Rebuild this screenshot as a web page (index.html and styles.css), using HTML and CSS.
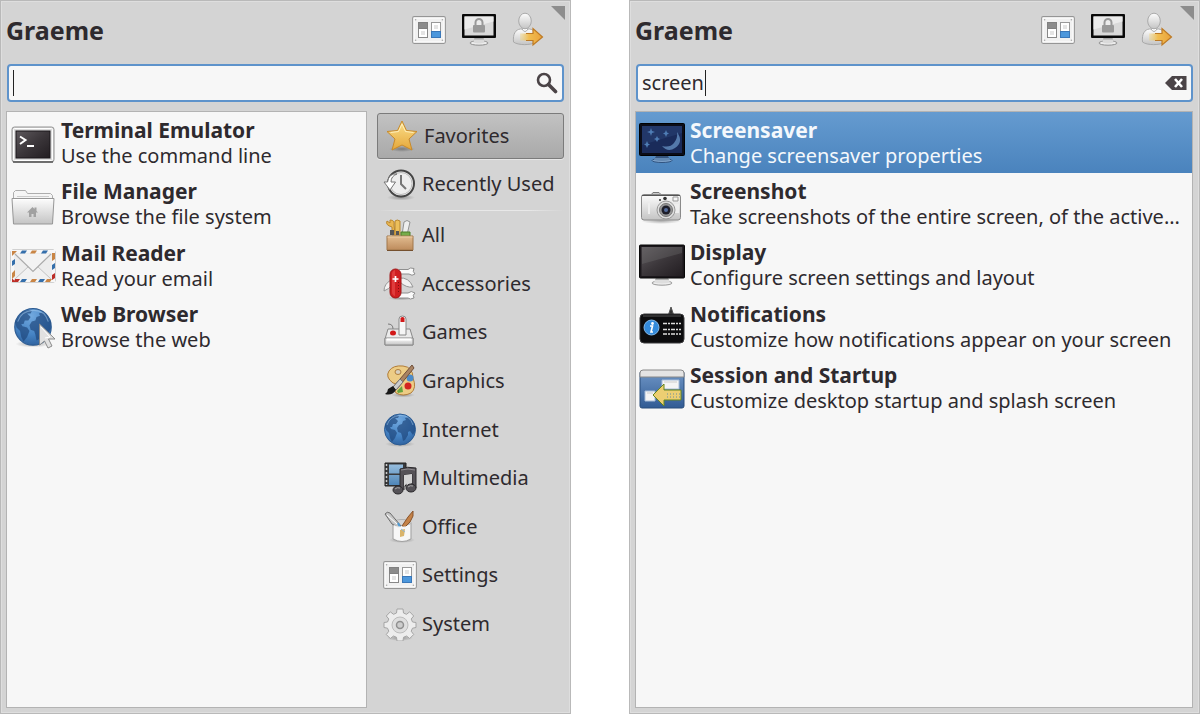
FILE: index.html
```html
<!DOCTYPE html>
<html lang="en">
<head>
<meta charset="utf-8">
<title>Application menu</title>
<link rel="stylesheet" href="styles.css">
</head>
<body>
<svg class="defs" aria-hidden="true">
  <defs>
    <linearGradient id="silver" x1="0" y1="0" x2="0" y2="1"><stop offset="0" stop-color="#fdfdfd"/><stop offset="1" stop-color="#c4c4c4"/></linearGradient>
    <linearGradient id="dark" x1="0" y1="0" x2="1" y2="1"><stop offset="0" stop-color="#5d585c"/><stop offset=".5" stop-color="#3b363a"/><stop offset="1" stop-color="#221d21"/></linearGradient>
    <linearGradient id="gold" x1="0" y1="0" x2="0" y2="1"><stop offset="0" stop-color="#fbe08c"/><stop offset="1" stop-color="#e5a73a"/></linearGradient>
    <linearGradient id="arrow" x1="0" y1="0" x2="1" y2="0"><stop offset="0" stop-color="#f3d06c" stop-opacity=".3"/><stop offset=".4" stop-color="#f1bd50"/><stop offset="1" stop-color="#e9a23b"/></linearGradient>
    <linearGradient id="wood" x1="0" y1="0" x2="0" y2="1"><stop offset="0" stop-color="#e2bd91"/><stop offset="1" stop-color="#bd8b5c"/></linearGradient>
    <linearGradient id="film" x1="0" y1="0" x2="0" y2="1"><stop offset="0" stop-color="#96bddd"/><stop offset="1" stop-color="#4f86b8"/></linearGradient>
    <linearGradient id="window" x1="0" y1="0" x2="0" y2="1"><stop offset="0" stop-color="#6f96c6"/><stop offset="1" stop-color="#315b94"/></linearGradient>
    <radialGradient id="sea" cx=".45" cy=".2" r=".85"><stop offset="0" stop-color="#72a9df"/><stop offset=".6" stop-color="#4583c4"/><stop offset="1" stop-color="#2d5f9b"/></radialGradient>
    <radialGradient id="shade"><stop offset="0" stop-color="#000" stop-opacity=".3"/><stop offset="1" stop-color="#000" stop-opacity="0"/></radialGradient>
  </defs>
  <symbol id="settings" viewBox="0 0 34 28">
    <rect x=".7" y=".7" width="32.6" height="26.6" rx="1.5" fill="#f1f1f1" stroke="#959595" stroke-width="1.2"/>
    <rect x="2" y="2" width="30" height="24" fill="none" stroke="#fff"/>
    <g fill="#aaa"><circle cx="3.6" cy="3.8" r=".8"/><circle cx="30.4" cy="3.8" r=".8"/><circle cx="3.6" cy="24.2" r=".8"/><circle cx="30.4" cy="24.2" r=".8"/></g>
    <rect x="6.5" y="6.5" width="9" height="15" fill="#fff" stroke="#888"/>
    <rect x="6.5" y="6.5" width="9" height="6" fill="#8b8b8b" stroke="#808080"/>
    <rect x="9" y="15" width="4" height="4" fill="#e4e4e4"/>
    <rect x="19.5" y="6.5" width="9" height="15" fill="#fff" stroke="#999"/>
    <rect x="22" y="9" width="4" height="4" fill="#e4e4e4"/>
    <rect x="19.5" y="15.500" width="9" height="6" fill="#4c97dc" stroke="#3a77b8"/>
  </symbol>
  <symbol id="lock" viewBox="0 0 36 34">
    <ellipse cx="18" cy="30" rx="9" ry="2.200" fill="#ececec" stroke="#8f8f8f"/>
    <path d="M13.500 24h9l1 5.500q-5.500 2-11 0z" fill="#dadada"/>
    <path d="M13.500 24.500h9l.5 2h-10z" fill="#a5a5a5"/>
    <rect x="1" y="1" width="34" height="24" rx="1" fill="#080808"/>
    <rect x="3.500" y="3.500" width="29" height="19" fill="#d9d9d9"/>
    <path d="M3.500 3.500h29v5l-29 8z" fill="#ebebeb"/>
    <path d="M14.500 12V9.500a3.500 3.500 0 0 1 7 0V12" fill="none" stroke="#999" stroke-width="2"/>
    <rect x="12" y="12" width="12" height="7.500" rx="1" fill="#999"/>
  </symbol>
  <symbol id="logout" viewBox="0 0 32 36">
    <path d="M1.500 30c-.8-8 2-12.500 7-13h9c5 .5 6.500 5 6.500 13-5 3.500-18 3.500-22.500 0z" fill="url(#silver)" stroke="#aaa"/>
    <path d="M10 17q3 5 6 0" fill="#fff" stroke="#aaa"/>
    <ellipse cx="13" cy="9" rx="6.300" ry="7.800" fill="url(#silver)" stroke="#aaa"/>
    <path d="M8 21.500h13v-5L30.500 25 21 33v-4.500H8z" fill="url(#arrow)"/>
    <path d="M14 21.500h7v-5L30.500 25 21 33v-4.500h-7" fill="none" stroke="#bd7a25" stroke-width="1.200"/>
  </symbol>
  <symbol id="globe" viewBox="0 0 34 34">
    <ellipse cx="17" cy="31" rx="15" ry="3" fill="url(#shade)"/>
    <circle cx="17" cy="16.500" r="15.500" fill="url(#sea)" stroke="#2d5c93"/>
    <path d="M4 9l4-5 5-2 3 1-1 2-3 0 3 3-2 3-3 0-1 3-2 0 1 2 4 1 2 3-2 5-3 4-2-4-1-5-3-3-1-4zM20 8l3-1-1-2 3-1 4 3 3 6v5l-2 4-3-4-2 1 0 3-3 5-2 1-1-5-1-3-3-1-1-4 2-3 3-1z" fill="#1d4378" opacity=".65"/>
    <path d="M4 12Q7 3 17 2.500T30 12" fill="none" stroke="#a8cdf0" opacity=".5"/>
  </symbol>
</svg>

<main class="screens">
  <section class="menu" aria-label="Favorites menu">
    <header class="menu-header">
      <h1 class="user">Graeme</h1>
      <div class="actions">
        <button class="action" aria-label="All settings"><svg width="34" height="28"><use href="#settings"/></svg></button>
        <button class="action" aria-label="Lock screen"><svg width="36" height="34"><use href="#lock"/></svg></button>
        <button class="action" aria-label="Log out"><svg width="32" height="36"><use href="#logout"/></svg></button>
      </div>
      <span class="grip"></span>
    </header>
    <div class="search">
      <input class="search-input" type="text" aria-label="Search applications">
      <span class="caret"></span>
      <svg class="search-icon" width="22" height="22" viewBox="0 0 22 22" fill="none" stroke="#4b4447"><circle cx="8" cy="8" r="6" stroke-width="2.600"/><path d="m12.500 12.500 7 7" stroke-width="3.600" stroke-linecap="round"/></svg>
    </div>
    <div class="menu-body">
      <div class="list">
        <div class="rows four">
          <button class="row">
            <svg class="icon" width="46" height="46" viewBox="0 0 46 46"><rect x="2" y="7" width="42" height="35" rx="2.500" fill="#dcdcdc" stroke="#929292"/><path d="M3 42h40" stroke="#555" stroke-width="1.500"/><rect x="3.500" y="8.500" width="39" height="32" rx="1" fill="none" stroke="#fff"/><rect x="6" y="11" width="34" height="27" fill="url(#dark)" stroke="#1a171a"/><path d="m10 16.500 5.500 3.500-5.500 4M17 26h7" fill="none" stroke="#fff" stroke-width="2"/></svg>
            <span class="label"><b>Terminal Emulator</b><span>Use the command line</span></span>
          </button>
          <button class="row">
            <svg class="icon" width="46" height="46" viewBox="0 0 46 46"><g transform="translate(0 3)"><path d="M3.500 16V8.500l2-2h10l2 3h23l2 2V38h-39z" fill="#f5f5f5" stroke="#adadad"/><path d="M7 12.500h32" stroke="#ccc"/><path d="M2 14.500h42l-1.500 25.500h-39z" fill="url(#silver)" stroke="#979797"/><path d="M3.500 15.500h39" stroke="#fff"/><path d="M17 28.500 22.500 23l2 2v-1.500h2V27l1.500 1.500h-2V33h-2.500v-3h-2v3H19v-4.500z" fill="#a1a1a1"/></g></svg>
            <span class="label"><b>File Manager</b><span>Browse the file system</span></span>
          </button>
          <button class="row">
            <svg class="icon" width="46" height="46" viewBox="0 0 46 46"><rect x="1" y="7" width="44" height="32.500" rx="2" fill="#eee" stroke="#aaa"/><rect x="2.500" y="8.500" width="41" height="29.500" fill="none" stroke="#f7f7f7" stroke-width="3"/><path d="M2 8h5l-5 5zM22 7.500h5l-2 3h-5zM42 10h3v6l-3 2zM2 30l3-3v6l-3 3zM22 36h5l-2 3h-5zM37 36h5l-2 3h-5z" fill="#c98545"/><path d="M12 7.500h5l-2 3h-5zM33 7.500h5l-2 3h-5zM2 18l3-2v5l-3 2zM42 22l3-2v5l-3 2zM12 36h5l-2 3h-5zM30 36h5l-2 3h-5z" fill="#356fab"/><path d="M2 35.500 6 39H2zM42 32l3-2v5l-3 2zM5 36h5l-2 3H4z" fill="#bd2e28"/><rect x="5" y="11" width="36" height="25" fill="#ededed"/><path d="m5 36 14-13 4 4 4-4 14 13" fill="#f1f1f1" stroke="#c3c3c3"/><path d="m5 11 18 17.500L41 11" fill="#f3f3f3" stroke="#ababab" stroke-width="1.200"/></svg>
            <span class="label"><b>Mail Reader</b><span>Read your email</span></span>
          </button>
          <button class="row">
            <svg class="icon" width="46" height="46" viewBox="0 0 46 46"><use href="#globe" x="3" y="3" width="40" height="41"/><path d="M29.500 20v21l5-4 3.500 7 4-2-3.500-7H45z" fill="#e1e1e1" stroke="#8b8b8b"/><path d="m31 23 9 10-5 1" fill="none" stroke="#fff"/></svg>
            <span class="label"><b>Web Browser</b><span>Browse the web</span></span>
          </button>
        </div>
      </div>
      <nav class="categories" aria-label="Categories">
        <button class="category active"><svg width="34" height="34" viewBox="0 0 34 34"><ellipse cx="17" cy="30" rx="13" ry="3" fill="url(#shade)"/><path d="m17 2 4.500 9.500L32 12.500l-8 7.500 3 11-10-5-10 5 3-11-8-7.500 10.500-1z" fill="url(#gold)" stroke="#c88a2a" stroke-linejoin="round"/><path d="m17 5 3.500 7.500 8 1M17 5l-3.500 7.500-8 1" fill="none" stroke="#fff0bd"/></svg>Favorites</button>
        <button class="category"><svg width="34" height="34" viewBox="0 0 34 34"><ellipse cx="18" cy="30.500" rx="14" ry="3" fill="url(#shade)"/><circle cx="18" cy="16.500" r="13" fill="#eee" stroke="#454545" stroke-width="2"/><circle cx="18" cy="16.500" r="11" fill="none" stroke="#bbb"/><path d="M18 8v9l5 5" fill="none" stroke="#777" stroke-width="2"/><path d="M14 7q-6 2-6 8h4.500L7 23 1 15h3.500Q6 6 14 7z" fill="#fff" stroke="#777"/></svg>Recently Used</button>
        <hr class="divider">
        <div class="category-group">
          <button class="category"><svg width="34" height="34" viewBox="0 0 34 34"><path d="M9 17V9Q2 7 4 3l3 2V2q5 0 4 5l1 10z" fill="#e9b651" stroke="#b98730"/><path d="M12 17V3q2-2 5 0v14z" fill="#ecbf5b" stroke="#b98730"/><path d="m19 17 2-13q3-3 6 0l-3 13z" fill="#eee" stroke="#929292"/><path d="M7 17v-5h4v5M13 17v-4h3v4" fill="#555"/><path d="M18 14h9v5h-9z" fill="#76ac4a" stroke="#4d7e29"/><path d="M4 18h26v14H4z" fill="url(#wood)" stroke="#a1764b"/><path d="M4.500 19h25" stroke="#edd0aa"/><path d="M4 32.500h26" stroke="#75502e"/></svg>All</button>
          <button class="category"><svg width="34" height="34" viewBox="0 0 34 34"><ellipse cx="18" cy="31" rx="13" ry="2.500" fill="url(#shade)"/><path d="M8 13Q1 17 1 24q5-2 8-6M16 11q10-1 14 9-7 1-13-5z" fill="#f2f2f2" stroke="#969696"/><path d="M16 2.500h9q2-2.500 6-1-2 3 1 5.500-3 2.500-6 0H16M16 31h9q2 2 6 0-2-3 1-5-4-3-7 0h-9" fill="#fafafa" stroke="#8e8e8e"/><rect x="7" y="2" width="11" height="29" rx="5.500" fill="#cf1e20" stroke="#9e1517"/><path d="M9 7q0-3 3-4v26q-3-1-3-4z" fill="#f05a58" opacity=".5"/><path d="M12.500 9v6m-3-3h6" stroke="#fff" stroke-width="1.700"/><path d="M15.500 15v11" stroke="#7e1012" stroke-dasharray="1 2"/></svg>Accessories</button>
          <button class="category"><svg width="34" height="34" viewBox="0 0 34 34"><path d="M5 9q5 0 5 5" fill="none" stroke="#777"/><path d="m5 14-3 10v6h28v-6l-3-10z" fill="#ebebeb" stroke="#888"/><path d="M2 23h28v7H2z" fill="url(#silver)" stroke="#888"/><path d="M4 24.500h24" stroke="#fff" stroke-width="2"/><ellipse cx="10" cy="18" rx="3" ry="2.500" fill="#d21919"/><path d="M16 20V4q0-3 3.500-3T23 4v16z" fill="#f6f6f6" stroke="#888"/><path d="M17.500 7V3q2-2 4 0v4z" fill="#d21919"/></svg>Games</button>
          <button class="category"><svg width="34" height="34" viewBox="0 0 34 34"><ellipse cx="20" cy="31" rx="12" ry="2.500" fill="url(#shade)"/><path d="M10 19Q2 13 6 7t14-5 10 12q4 10-2 15-8 4-15 0-3-3 0-6t-3-4z" fill="#edcc85" stroke="#b17d3a"/><ellipse cx="15" cy="8" rx="3" ry="2.500" fill="#d8d0bf" stroke="#b17d3a"/><circle cx="27" cy="14" r="3.500" fill="#4c8bc9"/><circle cx="25" cy="22" r="3.500" fill="#d32420"/><path d="m14 27 5-5 1 6-5 1z" fill="#65a43e"/><path d="M29 1 11 22l3 3L31 4z" fill="#a88363" stroke="#70503a"/><path d="m17 15-7 8 3 3 7-8z" fill="#ccc" stroke="#777"/><path d="m10 22 3 4q-4 6-11 4 3-2 3-5z" fill="#191919"/></svg>Graphics</button>
          <button class="category"><svg width="34" height="34"><use href="#globe"/></svg>Internet</button>
          <button class="category"><svg width="34" height="34" viewBox="0 0 34 34"><path d="M2 2h21v23H2z" fill="#3a3b3d" stroke="#222"/><path d="M6 3.500h14v9H6zM6 14h14v10H6z" fill="url(#film)"/><path d="M3.500 3v21" stroke="#ccc" stroke-width="1.500" stroke-dasharray="2 2"/><path d="M17 28V8q7-3 16-1v20h-4V13l-8 1v15" fill="#555257" stroke="#2d2b2e"/><path d="M21 14l8-1v9h-4q-4 2-4 5z" fill="#d4d4d4"/><path d="M18 9q7-2 14 0" fill="none" stroke="#908c90"/><ellipse cx="15" cy="29" rx="5" ry="4" fill="#555257" stroke="#29272a"/><ellipse cx="28" cy="27" rx="5" ry="4" fill="#555257" stroke="#29272a"/><path d="M12 28q2-2 5-1M25 26q2-2 5-1" stroke="#aaa" fill="none"/></svg>Multimedia</button>
          <button class="category"><svg width="34" height="34" viewBox="0 0 34 34"><ellipse cx="19" cy="30" rx="13" ry="3" fill="url(#shade)"/><path d="M10 13q8-5 18 0v16q-9 5-18 0z" fill="#f0f0f0" stroke="#a0a0a0"/><ellipse cx="19" cy="12.500" rx="9" ry="3" fill="#d6d6d6" stroke="#b0b0b0"/><path d="M2 4q2-3 5-1l11 13-3 1-6-3z" fill="#c6c6c6" stroke="#6c6c6c"/><path d="m4 5 10 9" stroke="#fff"/><path d="m19 16 6-9 5-6v5l-3 6-5 5z" fill="#c48248" stroke="#88532a"/><path d="m15 13 2 4" stroke="#4d9bd5" stroke-width="2"/><path d="M11 15v13q8 5 16 0V15q-8 3-16 0z" fill="#f8f8f8" opacity=".85"/><path d="m17 20 5-1-1 7-4 1z" fill="#d9b46b"/><path d="m18 19 4 3" stroke="#8cb6d6"/></svg>Office</button>
          <button class="category"><svg width="34" height="28"><use href="#settings"/></svg>Settings</button>
          <button class="category"><svg width="34" height="34" viewBox="0 0 34 34"><ellipse cx="17" cy="31" rx="13" ry="3" fill="url(#shade)"/><path d="m14 2 6 0 .5 4 3 1.300 3.200-2.500 4 4.200-2.500 3 1.300 3 3.500.5v5l-3.500.7-1.300 3 2.500 3.300-4 4-3.200-2.500-3 1.300-.5 3.700h-6l-.5-3.700-3-1.300-3.200 2.500-4-4 2.500-3.300-1.300-3L1 20.500v-5l3.500-.5 1.300-3-2.500-3 4-4.200 3.200 2.500 3-1.300z" fill="#ededed" stroke="#a5a5a5" stroke-linejoin="round"/><circle cx="17" cy="18" r="8" fill="#dfdfdf" stroke="#bcbcbc"/><circle cx="17" cy="18" r="3.500" fill="#cdcdcd" stroke="#8f8f8f" stroke-width="1.500"/></svg>System</button>
        </div>
      </nav>
    </div>
  </section>

  <section class="menu" aria-label="Search results menu">
    <header class="menu-header">
      <h1 class="user">Graeme</h1>
      <div class="actions">
        <button class="action" aria-label="All settings"><svg width="34" height="28"><use href="#settings"/></svg></button>
        <button class="action" aria-label="Lock screen"><svg width="36" height="34"><use href="#lock"/></svg></button>
        <button class="action" aria-label="Log out"><svg width="32" height="36"><use href="#logout"/></svg></button>
      </div>
      <span class="grip"></span>
    </header>
    <div class="search">
      <input class="search-input" type="text" value="screen" aria-label="Search applications">
      <span class="caret after-text"></span>
      <button class="search-icon" aria-label="Clear search"><svg width="22" height="16" viewBox="0 0 22 16"><path d="M0 8 7 1h14.500v14H7z" fill="#4b4447"/><path d="m10 4 7 8m0-8-7 8" stroke="#fff" stroke-width="2.600"/></svg></button>
    </div>
    <div class="menu-body">
      <div class="list">
        <div class="rows">
          <button class="row selected">
            <svg class="icon" width="46" height="46" viewBox="0 0 46 46"><ellipse cx="23" cy="40.500" rx="10" ry="2" fill="#7fa3cb" stroke="#2f5380"/><path d="M17 35h12l2 5q-8 2-16 0z" fill="#6288b2"/><path d="M17 36h12l1 2H16z" fill="#35557f"/><rect x=".5" y="3.500" width="45" height="32" rx="1" fill="#0b0d18" stroke="#000"/><rect x="3" y="6" width="40" height="27" fill="#1a2b5a"/><path d="M3 6h40v7L3 25z" fill="#263d6d" opacity=".7"/><path d="M38 12q7 10-2 16-7 5-13-2 8 2 12-3t3-11z" fill="#5479aa"/><path d="m12 8 1 3 3 1-3 1-1 3-1-3-3-1 3-1zM27 10l1 2.500 2 1-2 1-1 2.500-1-2.500-2-1 2-1zM18 16l1 2 2 1-2 1-1 2-1-2-2-1 2-1zM8 21l1 2.500 2 1-2 1-1 2.500-1-2.500-2-1 2-1z" fill="#4f7db5"/></svg>
            <span class="label"><b>Screensaver</b><span>Change screensaver properties</span></span>
          </button>
          <button class="row">
            <svg class="icon" width="46" height="46" viewBox="0 0 46 46"><g transform="translate(-1 2)"><ellipse cx="23" cy="38" rx="20" ry="3" fill="url(#shade)"/><path d="M13 12 15 9.500h6l2 2z" fill="#ccc" stroke="#777"/><rect x="3.500" y="11.500" width="39" height="25.500" rx="2.500" fill="url(#silver)" stroke="#8a8a8a"/><path d="M4 12.500h38" stroke="#555"/><path d="M10 20h2v11h-2zM35 21h6v9h-6z" fill="#eee"/><path d="M35 14h5v4h-5z" fill="#f6f6f6" stroke="#999"/><circle cx="28" cy="27" r="9" fill="#ddd" stroke="#999"/><circle cx="28" cy="27" r="6.500" fill="#989898" stroke="#777"/><circle cx="28" cy="27" r="4.500" fill="#1d1e29"/><circle cx="28" cy="27" r="2" fill="#536b9a"/><circle cx="27" cy="15.500" r="1.800" fill="#333"/><circle cx="22" cy="17" r="1" fill="#333"/></g></svg>
            <span class="label"><b>Screenshot</b><span>Take screenshots of the entire screen, of the active...</span></span>
          </button>
          <button class="row">
            <svg class="icon" width="46" height="46" viewBox="0 0 46 46"><ellipse cx="23" cy="41" rx="10" ry="2.200" fill="#eee" stroke="#999"/><path d="M17 35h12l2 5.500q-8 2-16 0z" fill="#dedede"/><path d="M17 36h12l1 2H16z" fill="#aaa"/><rect x=".5" y="3" width="45" height="33" rx="1" fill="#1b171b" stroke="#080808"/><rect x="2.500" y="5" width="41" height="29" fill="url(#dark)"/><path d="M3 5h40v6L3 22z" fill="#777" opacity=".3"/></svg>
            <span class="label"><b>Display</b><span>Configure screen settings and layout</span></span>
          </button>
          <button class="row">
            <svg class="icon" width="46" height="46" viewBox="0 0 46 46"><path d="m29 12 3-9 3 9z" fill="#333" stroke="#555"/><rect x="1" y="10" width="44" height="29" rx="4" fill="#0c0c0e" stroke="#3b3b3d"/><path d="M4 12h38" stroke="#555"/><circle cx="12.500" cy="23.500" r="7.500" fill="#348bdc" stroke="#82b9eb"/><circle cx="13.500" cy="19.500" r="1.400" fill="#fff"/><path d="M11 22h2.500L12 28h2" stroke="#fff" stroke-width="1.600" fill="none"/><path d="M24 19.500h18M24 25.500h18M24 30h18" stroke="#ddd" stroke-width="1.500" stroke-dasharray="4 1 2 1"/></svg>
            <span class="label"><b>Notifications</b><span>Customize how notifications appear on your screen</span></span>
          </button>
          <button class="row">
            <svg class="icon" width="46" height="46" viewBox="0 0 46 46"><g transform="translate(0 1)"><rect x="1" y="5" width="44" height="37" rx="2" fill="url(#window)" stroke="#294d7b"/><path d="M1 11V7q0-3 3-3h38q3 0 3 3v4z" fill="#e4e4e4" stroke="#888"/><path d="M23 14h17v9H23zM6 25h10v10H6z" fill="#f4f4f4" stroke="#a8bdd8"/><path d="M25 16h13M8 27h6" stroke="#ccc"/><path d="M14 29 25 18v6h17v10H25v6z" fill="#edce72" stroke="#67861e" stroke-linejoin="round"/><path d="M28 28h14M28 31h14" stroke="#678ea0" stroke-dasharray="1 2"/></g></svg>
            <span class="label"><b>Session and Startup</b><span>Customize desktop startup and splash screen</span></span>
          </button>
        </div>
      </div>
    </div>
  </section>
</main>
</body>
</html>
```

FILE: styles.css
```css
* {
  box-sizing: border-box;
}

body {
  margin: 0;
  background: #fff;
  color: #2e2a2e;
  font-family: "Noto Sans", "Open Sans", sans-serif;
  font-size: 20px;
  line-height: 26px;
}

button {
  margin: 0;
  padding: 0;
  border: 0;
  background: none;
  color: inherit;
  font: inherit;
  text-align: left;
}

svg {
  display: block;
  flex: none;
}

.defs {
  position: absolute;
  width: 0;
  height: 0;
}

.screens {
  display: grid;
  grid-template-columns: minmax(0, 1fr) minmax(0, 1fr);
  gap: 58px;
  min-height: 100vh;
}

.menu {
  display: flex;
  flex-direction: column;
  padding: 0 6px 5px 5px;
  border: 1px solid #b9b9b9;
  background: #d4d4d4;
  box-shadow: inset 0 0 0 1px #dedede;
}

.menu-header {
  position: relative;
  display: flex;
  align-items: center;
  justify-content: space-between;
  height: 63px;
  padding: 0 20px 6px 0;
}

.user {
  margin: 0;
  font-size: 25px;
  font-weight: 700;
  line-height: 32px;
}

.actions {
  display: flex;
  align-items: center;
  gap: 15px;
}

.grip {
  position: absolute;
  top: 5px;
  right: -1px;
  border-top: 14px solid #8d8d8d;
  border-left: 14px solid transparent;
}

.search {
  position: relative;
  margin: 0 0 9px 1px;
}

.search-input {
  display: block;
  width: 100%;
  height: 38px;
  padding: 0 36px 2px 4px;
  border: 2px solid #5e93cb;
  border-radius: 4px;
  outline: 0;
  background: #f7f7f7;
  color: inherit;
  font: inherit;
}

.caret {
  position: absolute;
  top: 6px;
  left: 6px;
  width: 1px;
  height: 26px;
  background: #222;
}

.caret.after-text {
  left: 69px;
}

.search-icon {
  position: absolute;
  top: 50%;
  right: 6px;
  transform: translateY(-50%);
}

.menu-body {
  display: flex;
  flex: 1;
  gap: 10px;
}

.list {
  flex: 1;
  min-width: 0;
  border: 1px solid #b3b3b3;
  background: #f7f7f7;
}

.rows {
  display: grid;
  grid-template-rows: repeat(5, 1fr);
  height: 307px;
}

.rows.four {
  grid-template-rows: repeat(4, 1fr);
  height: 246px;
}

.row {
  display: flex;
  align-items: center;
  gap: 5px;
  width: 100%;
  min-width: 0;
  padding-left: 3px;
}

.row.selected {
  background: linear-gradient(#659bd0, #4a83bd);
  color: #f4f8fc;
}

.label {
  display: flex;
  flex-direction: column;
  min-width: 0;
  white-space: nowrap;
}

.label b {
  font-size: 21px;
}

.categories {
  display: flex;
  flex: none;
  flex-direction: column;
  width: 187px;
  padding-top: 2px;
}

.category {
  display: flex;
  align-items: center;
  gap: 5px;
  height: 46px;
  padding-left: 6px;
  white-space: nowrap;
}

.category.active {
  margin-bottom: 2px;
  padding-left: 7px;
  border: 1px solid #7b7b7b;
  border-radius: 3px;
  background: linear-gradient(#c2c2c2, #a9a9a9);
  box-shadow: 0 1px 0 #e6e6e6;
}

.divider {
  width: 100%;
  height: 1px;
  margin: 3px 0 1px;
  border: 0;
  background: linear-gradient(90deg, transparent, #e8e8e8 20%, #e8e8e8 80%, transparent);
}

.category-group {
  display: flex;
  flex-direction: column;
  justify-content: space-between;
  height: 435px;
}
```
